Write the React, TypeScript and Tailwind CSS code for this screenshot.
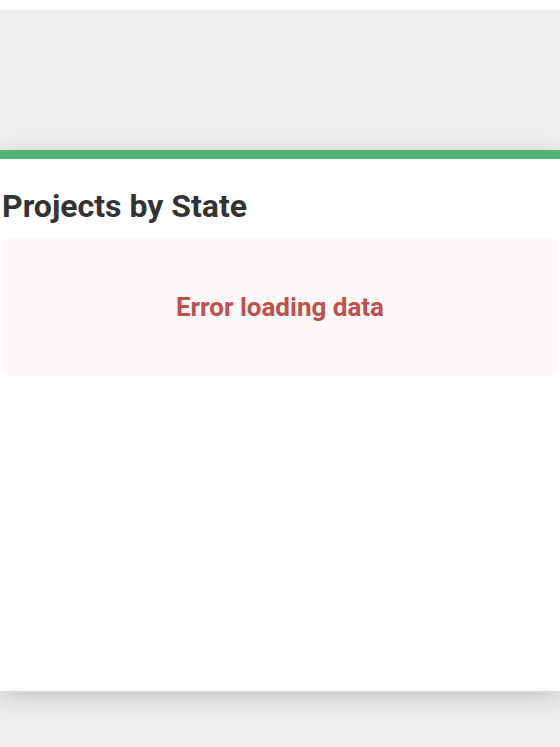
export default function App() {
  return (
    <div className="min-h-[747px] bg-white pt-[10px]" style={{ fontFamily: "Roboto, 'Noto Sans', sans-serif" }}>
      <div className="flex min-h-[737px] flex-col bg-[#eeeeee]">
        <div className="h-[140px]" />
        <div className="h-[541px] border-t-[9px] border-[#53b679] bg-white shadow-[0_6px_24px_rgba(0,0,0,0.18)]">
          <h2 className="mt-[28px] pl-[2px] text-[32px] font-bold leading-[38px] text-[#333333]">Projects by State</h2>
          <div className="mx-[2px] mt-[13px] flex h-[138px] items-center justify-center rounded-[8px] bg-[#fdf9f8]">
            <p className="text-[26px] font-bold text-[#c14f4c]">Error loading data</p>
          </div>
        </div>
      </div>
    </div>
  )
}
